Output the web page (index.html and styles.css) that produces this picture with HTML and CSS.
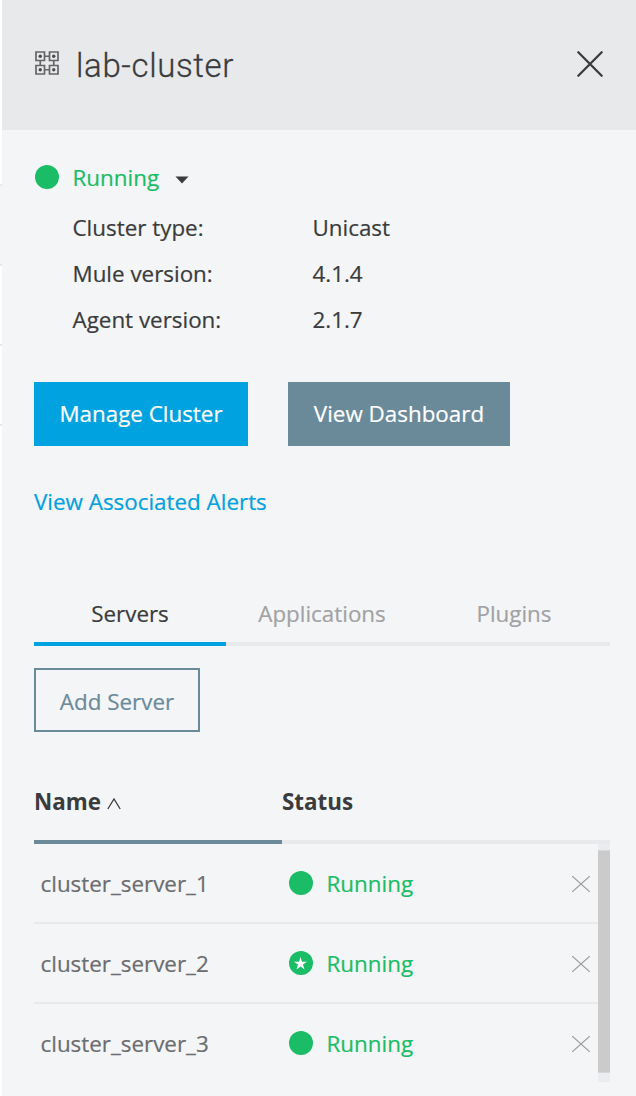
FILE: index.html
```html
<!DOCTYPE html>
<html lang="en">
<head>
<meta charset="utf-8">
<title>lab-cluster</title>
<link rel="stylesheet" href="styles.css">
</head>
<body>
<div class="page">
  <div class="underlay"><i></i><i class="selected"></i><i></i><i></i><i class="rest"></i></div>
  <main class="panel">
    <header class="panel-header">
      <svg class="cluster-icon" width="24" height="24" viewBox="0 0 24 24" fill="none" stroke="#636567" stroke-width="1.700">
        <path d="M1 1h8.500v8.500H1zM14.500 1H23v8.500h-8.500zM1 14.500h8.500V23H1zM14.500 14.500H23V23h-8.500zM9.500 5.250h5M9.500 18.750h5M5.250 9.500v5M18.750 9.500v5"/>
        <g fill="#4a4b4d" stroke="none"><circle cx="5.250" cy="5.250" r="1.700"/><circle cx="18.750" cy="5.250" r="1.700"/><circle cx="5.250" cy="18.750" r="1.700"/><circle cx="18.750" cy="18.750" r="1.700"/></g>
      </svg>
      <h1>lab-cluster</h1>
      <svg class="close" width="28" height="28" viewBox="0 0 28 28" stroke="#3a3b3d" stroke-width="2.300" stroke-linecap="round"><path d="M2.300 2.300l23.400 23.400M25.700 2.300L2.300 25.700"/></svg>
    </header>
    <section class="body">
      <div class="state"><span class="dot"></span><span class="running">Running</span><svg class="caret" width="14" height="8" viewBox="0 0 14 8"><path d="M.5.500h13L7 7.500z" fill="#3a3b3d"/></svg></div>
      <dl class="facts">
        <dt>Cluster type:</dt><dd>Unicast</dd>
        <dt>Mule version:</dt><dd>4.1.4</dd>
        <dt>Agent version:</dt><dd>2.1.7</dd>
      </dl>
      <div class="actions"><button class="button primary">Manage Cluster</button><button class="button secondary">View Dashboard</button></div>
      <a class="alerts">View Associated Alerts</a>
      <nav class="tabs"><span class="tab active">Servers</span><span class="tab">Applications</span><span class="tab">Plugins</span></nav>
      <button class="button outline">Add Server</button>
      <div class="table-head">
        <div class="sorted">Name<svg width="14" height="12" viewBox="0 0 14 12" fill="none" stroke="#3a3b3d" stroke-width="1.300"><path d="M.8 11L7 1l6.200 10"/></svg></div>
        <div>Status</div>
      </div>
      <div class="rows">
        <div class="row"><span>cluster_server_1</span><span class="status"><span class="dot"></span>Running</span><svg class="remove" width="18" height="16" viewBox="0 0 18 16"><path d="M0 0l18 16M18 0L0 16"/></svg></div>
        <div class="row"><span>cluster_server_2</span><span class="status"><span class="dot"><svg width="13" height="13" viewBox="0 0 12 12"><path d="M6 0l1.400 4.300H12L8.300 7l1.400 4.500L6 8.800l-3.700 2.700L3.700 7 0 4.300h4.600z" fill="#fff"/></svg></span>Running</span><svg class="remove" width="18" height="16" viewBox="0 0 18 16"><path d="M0 0l18 16M18 0L0 16"/></svg></div>
        <div class="row"><span>cluster_server_3</span><span class="status"><span class="dot"></span>Running</span><svg class="remove" width="18" height="16" viewBox="0 0 18 16"><path d="M0 0l18 16M18 0L0 16"/></svg></div>
        <div class="scrollbar"><div class="thumb"></div></div>
      </div>
    </section>
  </main>
</div>
</body>
</html>
```
FILE: styles.css
```css
* { box-sizing: border-box; }
body { margin: 0; background: #fff; color: #3a3b3d; font: 22.4px/32px "Open Sans", "Noto Sans", sans-serif; -webkit-text-stroke: .2px; overflow: hidden; }
.page { display: flex; height: 1096px; }
.underlay { width: 2px; display: flex; flex-direction: column; }
.underlay i { height: 80px; border-bottom: 2px solid #e8e9ea; }
.underlay i:first-child { height: 186px; }
.underlay .selected { background: #f4f5f7; }
.underlay .rest { border: 0; flex: 1; }
.panel { flex: 1; background: #f4f5f7; }
.panel-header { height: 130px; padding: 0 32px 2px 33px; background: #e8e9ea; display: flex; align-items: center; }
.cluster-icon { margin-top: -2px; }
h1 { margin: 3px 0 0 17px; font: 300 33px/40px Roboto, sans-serif; letter-spacing: .65px; -webkit-text-stroke: .3px; }
.close { margin-left: auto; }
.body { padding: 32px 26px 0 32px; }
.state { display: flex; align-items: center; height: 32px; padding-left: .5px; }
.dot { width: 24.5px; height: 24.5px; flex: none; border-radius: 50%; background: #1abc66; margin: 0 13.5px 2px 0; display: flex; align-items: center; justify-content: center; }
.running, .status { color: #1abc66; }
.running { margin-top: -1px; }
.caret { margin: 3px 0 0 16px; }
.facts { margin: 11px 0 0 38.5px; display: grid; grid-template-columns: 240px 1fr; line-height: 46px; }
.facts dd { margin: 0; }
.actions { margin-top: 39px; display: flex; gap: 40px; }
.button { font: inherit; height: 64px; border: 0; padding: 0 0 1px; color: #fff; }
.primary { width: 214px; background: #00a2df; }
.secondary { width: 222px; background: #6a8a9a; }
.alerts { display: block; margin-top: 40px; color: #00a2df; }
.tabs { display: grid; grid-template-columns: repeat(3, 192px); margin-top: 64px; text-align: center; color: #a1a2a4; }
.tab { height: 64px; padding-top: 16px; border-bottom: 4px solid #e8e9ea; }
.active { color: #3a3b3d; border-color: #00a2df; }
.outline { display: block; width: 166px; margin-top: 22px; color: #6a8a9a; background: transparent; border: 2px solid #6a8a9a; padding: 3px 0 0; }
.table-head { display: grid; grid-template-columns: 248px 1fr; margin-top: 44px; font-weight: 700; -webkit-text-stroke: 0; }
.table-head div { height: 68px; padding-top: 10px; border-bottom: 4px solid #e8e9ea; }
.table-head .sorted { border-color: #6a8a9a; }
.sorted svg { margin-left: 6px; }
.rows { position: relative; height: 238px; }
.row { height: 80px; padding: 0 20px 0 6.5px; display: grid; grid-template-columns: 248px 1fr 18px; align-items: center; border-bottom: 2px solid #e8e9ea; color: #6c6d6f; }
.row:nth-child(3) { border-color: transparent; }
.row > span { padding-top: 1px; }
.status { display: flex; align-items: center; }
.status .dot { margin-bottom: 1px; }
.remove { stroke: #9b9c9e; stroke-width: 1.2; margin-top: 2px; }
.scrollbar { position: absolute; right: 0; top: 0; width: 12px; height: 238px; background: #ebecf0; padding-top: 6px; }
.thumb { height: 223px; background: #cbcbcb; border: solid #d6d8d8; border-width: 1px 0; }
```
